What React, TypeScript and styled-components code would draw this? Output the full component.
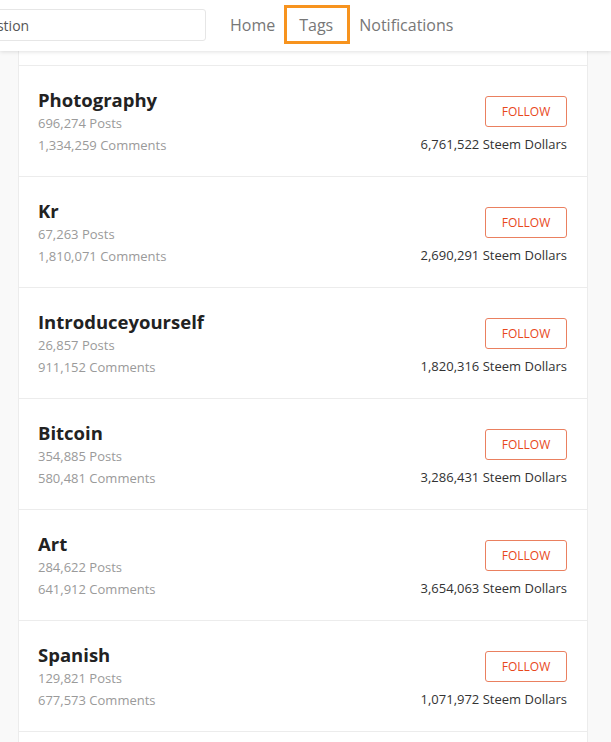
import React from "react";
import styled, { createGlobalStyle } from "styled-components";

const Global = createGlobalStyle`
  html, body { margin: 0; padding: 0; background: #f9f9f9; }
  body { font-family: "Open Sans", "Liberation Sans", sans-serif; overflow: hidden; }
  * { box-sizing: border-box; }
`;

const Page = styled.div`
  width: 611px;
  height: 742px;
  overflow: hidden;
  background: #f9f9f9;
`;

const Header = styled.header`
  height: 51px;
  background: #fff;
  display: flex;
  align-items: center;
  box-shadow: 0 1px 4px rgba(0, 0, 0, 0.12);
  position: relative;
  z-index: 2;
`;

const Search = styled.input`
  width: 283px;
  height: 32px;
  margin-left: -77px;
  margin-bottom: 1px;
  border: 1px solid #e6e6e6;
  border-radius: 3px;
  padding: 0 10px;
  font-family: inherit;
  font-size: 14px;
  color: #555;
  outline: none;
`;

const Nav = styled.nav`
  display: flex;
  align-items: center;
  gap: 9px;
  margin-left: 24px;
  margin-bottom: 2px;
`;

const NavItem = styled.a<{ $active?: boolean }>`
  display: flex;
  align-items: center;
  height: ${(p) => (p.$active ? "39px" : "auto")};
  padding: ${(p) => (p.$active ? "0 14px 0 12px" : "0")};
  font-size: 16px;
  color: #777;
  text-decoration: none;
  border: ${(p) => (p.$active ? "3px solid #f7931e" : "0")};
`;

const List = styled.div`
  margin: 0 23px 0 18px;
  background: #fff;
  border-left: 1px solid #ececec;
  border-right: 1px solid #ececec;
`;

const TopSpacer = styled.div`
  height: 15px;
  border-bottom: 1px solid #ececec;
`;

const BottomSpacer = styled.div`
  height: 24px;
`;

const Row = styled.div`
  display: flex;
  justify-content: space-between;
  align-items: flex-start;
  padding: 22px 20px 20px 19px;
  border-bottom: 1px solid #ececec;
`;

const Info = styled.div`
  display: flex;
  flex-direction: column;
`;

const Title = styled.div`
  font-size: 18.5px;
  line-height: 24px;
  font-weight: 700;
  color: #222;
`;

const Meta = styled.div`
  font-size: 13px;
  line-height: 22px;
  color: #9a9a9a;
`;

const Side = styled.div`
  display: flex;
  flex-direction: column;
  align-items: flex-end;
  gap: 6px;
  padding-top: 8px;
`;

const FollowButton = styled.button`
  width: 82px;
  height: 31px;
  border: 1px solid #ea8060;
  border-radius: 3px;
  background: #fff;
  color: #e8481c;
  font-family: inherit;
  font-size: 12px;
  text-transform: uppercase;
  padding: 0;
  cursor: pointer;
`;

const Dollars = styled.div`
  font-size: 13px;
  line-height: 22px;
  color: #333;
`;

const tags = [
  { name: "Photography", posts: "696,274", comments: "1,334,259", dollars: "6,761,522" },
  { name: "Kr", posts: "67,263", comments: "1,810,071", dollars: "2,690,291" },
  { name: "Introduceyourself", posts: "26,857", comments: "911,152", dollars: "1,820,316" },
  { name: "Bitcoin", posts: "354,885", comments: "580,481", dollars: "3,286,431" },
  { name: "Art", posts: "284,622", comments: "641,912", dollars: "3,654,063" },
  { name: "Spanish", posts: "129,821", comments: "677,573", dollars: "1,071,972" },
];

export default function App() {
  return (
    <Page>
      <Global />
      <Header>
        <Search defaultValue="Ask a question" readOnly />
        <Nav>
          <NavItem href="#">Home</NavItem>
          <NavItem href="#" $active>Tags</NavItem>
          <NavItem href="#">Notifications</NavItem>
        </Nav>
      </Header>
      <List>
        <TopSpacer />
        {tags.map((t) => (
          <Row key={t.name}>
            <Info>
              <Title>{t.name}</Title>
              <Meta>{t.posts} Posts</Meta>
              <Meta>{t.comments} Comments</Meta>
            </Info>
            <Side>
              <FollowButton>Follow</FollowButton>
              <Dollars>{t.dollars} Steem Dollars</Dollars>
            </Side>
          </Row>
        ))}
        <BottomSpacer />
      </List>
    </Page>
  );
}
